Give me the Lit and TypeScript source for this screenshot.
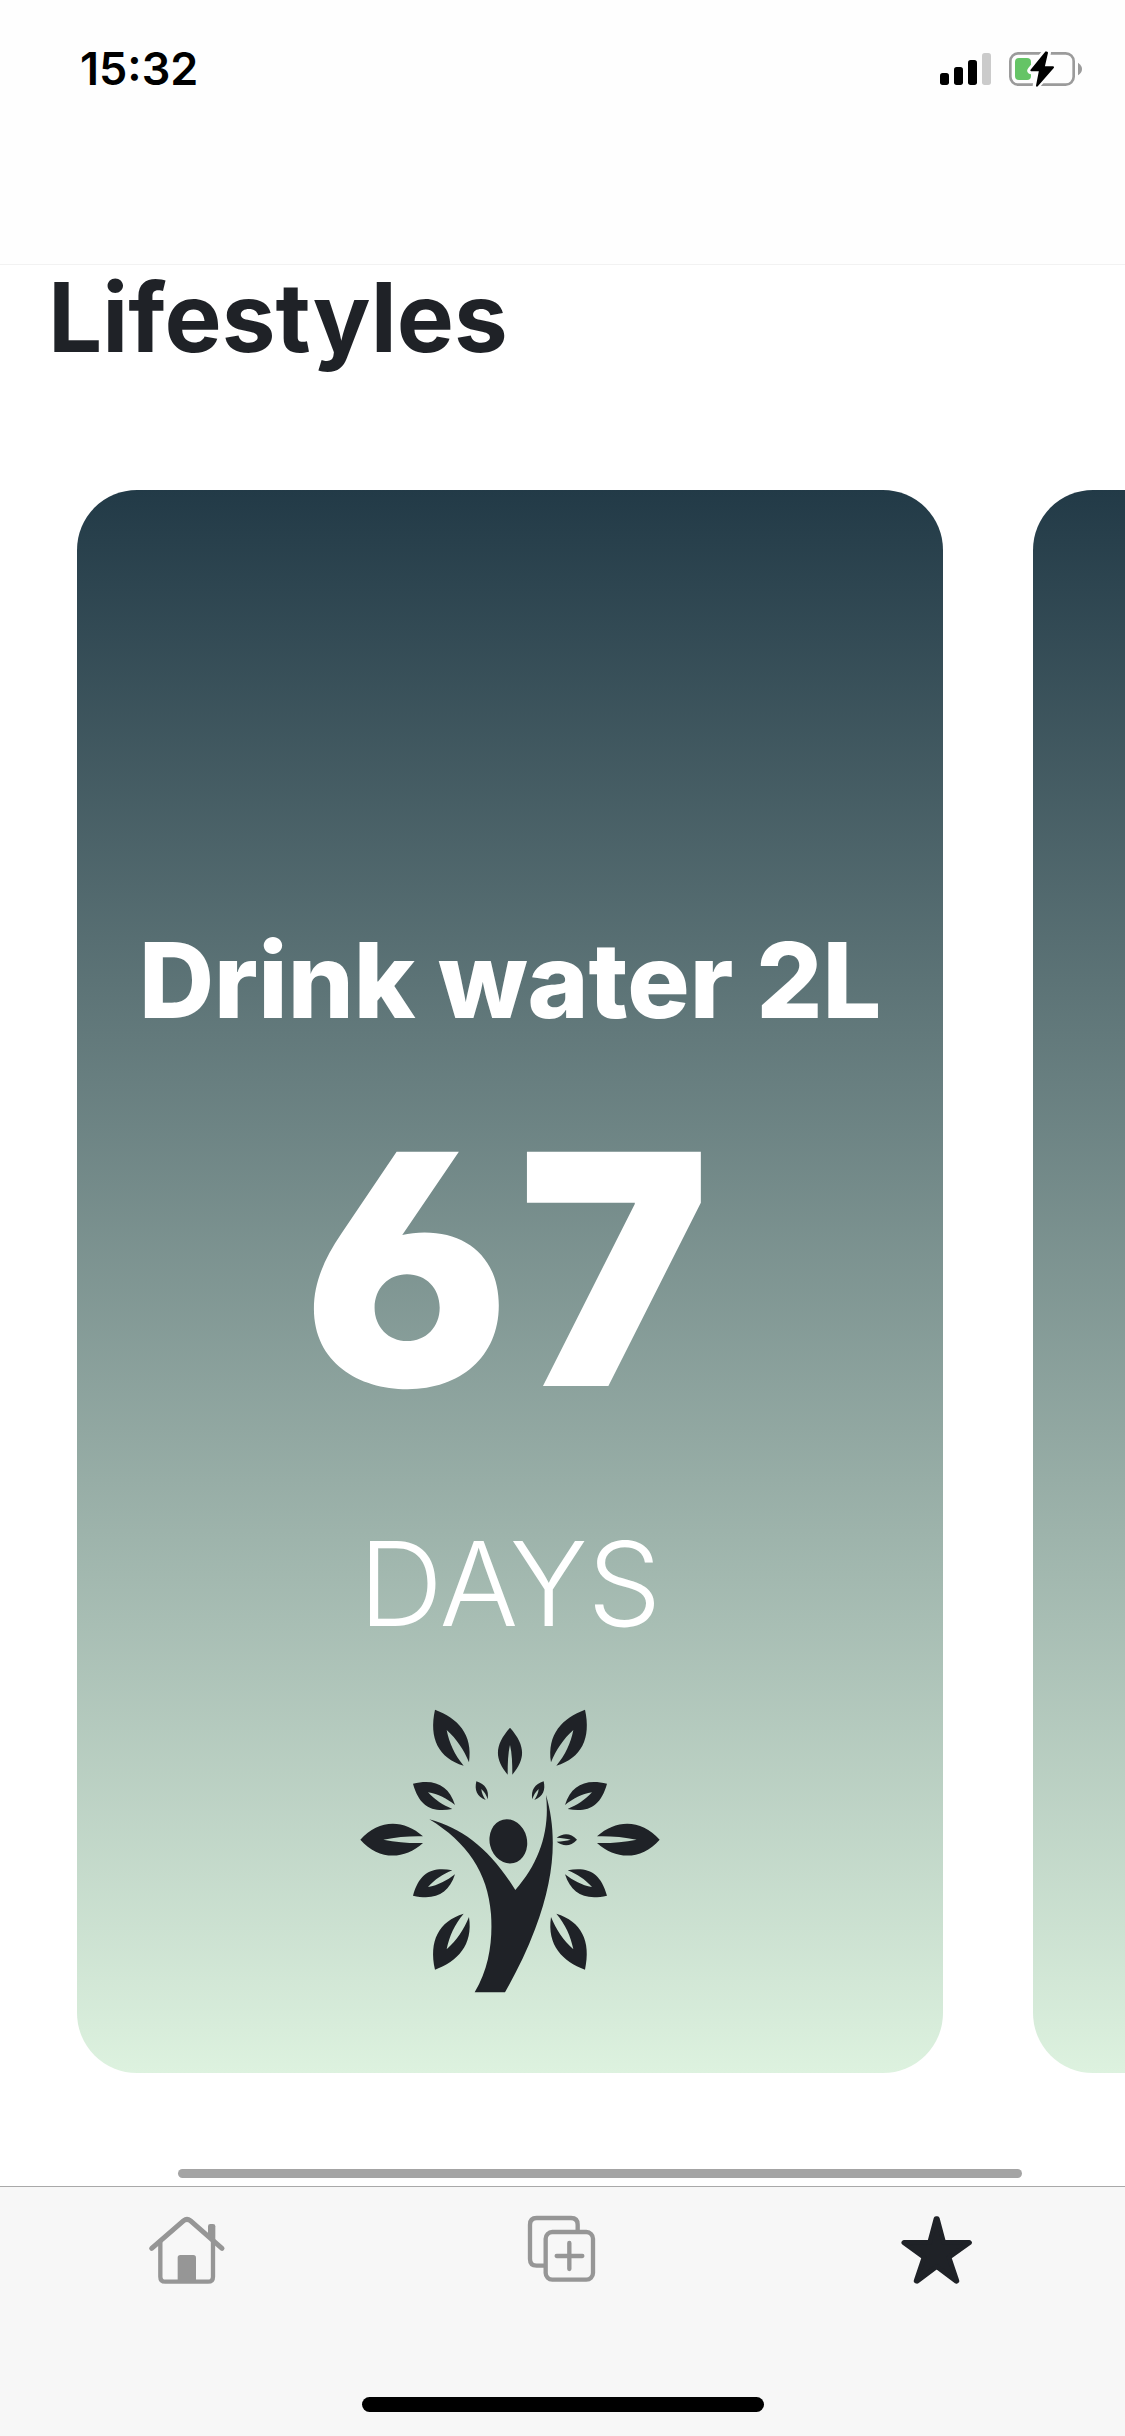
import { LitElement, html, css, svg, nothing } from "lit";
import { customElement, property, state } from "lit/decorators.js";

const BIG_LEAF =
  "M285 59C352 84 400 132 387 217C372 180 350 147 320 120C328 160 344 195 371 227C296 204 266 145 285 59Z";
const MID_LEAF =
  "M219 281C285 266 326 286 345 345C320 326 295 312 264 307C285 330 308 345 337 357C276 368 238 350 219 281Z";
const SIDE_LEAF =
  "M61 449C115 388 190 386 249 439C210 438 170 441 130 449C170 457 210 460 249 459C190 512 115 510 61 449Z";
const SMALL_LEAF =
  "M409 274C436 283 448 300 443 328C439 315 433 305 424 297C425 310 430 320 437 330C410 320 403 300 409 274Z";

@customElement("status-bar")
class StatusBar extends LitElement {
  static styles = css`
    :host {
      display: flex;
      justify-content: space-between;
      align-items: flex-start;
      padding-left: 80px;
      color: #000;
    }
    .time {
      font: 600 45px/78px Inter, "Liberation Sans", sans-serif;
    }
    .icons {
      display: block;
      width: 225px;
      height: 80px;
    }
  `;

  render() {
    return html`
      <time class="time">15:32</time>
      <svg class="icons" viewBox="0 0 675 240" aria-hidden="true">
        <rect x="120" y="129" width="27" height="36" rx="8" />
        <rect x="162" y="111" width="27" height="54" rx="8" />
        <rect x="204" y="90" width="27" height="75" rx="8" />
        <rect x="246" y="69" width="27" height="96" rx="8" fill="#cbcbcb" />
        <rect x="331" y="70" width="190" height="94" rx="24" fill="none" stroke="#9b9b9b" stroke-width="8" />
        <path d="M534 98Q546 106 546 117Q546 129 534 136Z" fill="#9b9b9b" />
        <rect x="345" y="84" width="48" height="66" rx="12" fill="#65c466" />
        <path
          d="M438 66L393 122H418L409 167L458 111H432L442 67Z"
          fill="#000"
          stroke="#fefefe"
          stroke-width="22"
          stroke-linejoin="round"
        />
        <path
          d="M438 67L394 121H420L411 167L459 112H431L441 68Z"
          fill="#000"
          stroke="#000"
          stroke-width="6"
          stroke-linejoin="round"
        />
      </svg>
    `;
  }
}

@customElement("habit-card")
class HabitCard extends LitElement {
  @property() name = "";
  @property({ type: Number }) days = 0;

  static styles = css`
    :host {
      box-sizing: border-box;
      display: flex;
      flex-direction: column;
      align-items: center;
      padding: 428px 20px 63px;
      border-radius: 60px;
      background: linear-gradient(#223a47, #ddf2df);
      color: #fff;
      font-family: Inter, "Open Sans", sans-serif;
      text-align: center;
      white-space: nowrap;
    }
    .name {
      margin: 0;
      font-size: 104px;
      font-weight: 800;
      line-height: 124px;
    }
    .count {
      margin: 32px 0 0;
      font-size: 322px;
      font-weight: 900;
      line-height: 390px;
      font-variant-numeric: tabular-nums;
      font-feature-settings: "cv03", "ss01";
    }
    .unit {
      margin: 49px 0 0;
      font-size: 117px;
      font-weight: 300;
      line-height: 142px;
    }
    .emblem {
      display: block;
      width: 340px;
      height: 320px;
      margin-top: 35px;
      fill: #1f2227;
    }
  `;

  render() {
    if (!this.name) return nothing;
    const leaves = svg`<path d=${BIG_LEAF} /><path d=${MID_LEAF} />`;
    const upper = svg`<path d=${SIDE_LEAF} /><path d=${SMALL_LEAF} />`;
    return html`
      <h2 class="name">${this.name}</h2>
      <p class="count">${this.days}</p>
      <p class="unit">DAYS</p>
      <svg class="emblem" viewBox="0 0 1020 960" aria-hidden="true">
        <g>${leaves}${upper}</g>
        <g transform="translate(1020 0) scale(-1 1)">${leaves}${upper}</g>
        <g transform="translate(0 898) scale(1 -1)">${leaves}</g>
        <g transform="translate(1020 898) scale(-1 -1)">${leaves}</g>
        <path
          d="M510 113C556 165 558 206 517 254C517 220 516 190 510 165C504 190 503 220 503 254C462 206 464 165 510 113Z"
        />
        <path
          d="M711 449C692 428 670 428 650 443C665 444 680 446 692 449C680 452 665 454 650 455C670 470 692 470 711 449Z"
        />
        <ellipse cx="505" cy="454" rx="56" ry="67" transform="rotate(-14 505 454)" />
        <path
          d="M268 388C370 416 450 478 526 600C600 516 630 420 618 315C652 430 645 560 585 718C560 785 530 845 495 907H404C450 830 458 745 453 672C444 548 380 456 268 388Z"
        />
      </svg>
    `;
  }
}

@customElement("tab-bar")
class TabBar extends LitElement {
  @state() private active = 2;

  static styles = css`
    :host {
      display: block;
      border-top: 1px solid #a9a9a9;
      background: #f7f7f7;
    }
    .tabs {
      display: grid;
      grid-template-columns: repeat(3, 1fr);
    }
    .tab {
      display: flex;
      justify-content: center;
      padding: 13px 0 0;
      border: 0;
      background: none;
      color: #969696;
      cursor: pointer;
    }
    .tab.active {
      color: #1f2227;
    }
    .icon {
      display: block;
      width: 120px;
      height: 100px;
    }
    .home {
      width: 402px;
      height: 15px;
      margin: 97px auto 24px;
      border-radius: 8px;
      background: #000;
    }
  `;

  private tabs = [
    {
      label: "Home",
      icon: html`<svg class="icon" viewBox="-7 0 360 300" fill="none" stroke="currentColor" stroke-width="13" aria-hidden="true">
        <path d="M64 145L160 62Q170 54 180 62L275 145" stroke-width="15" stroke-linecap="round" stroke-linejoin="round" />
        <path d="M90 122V230Q90 245 105 245H233Q248 245 248 230V122" />
        <path d="M233 108V79Q233 72 240 72H248Q255 72 255 79V126Z" fill="currentColor" stroke="none" />
        <path d="M142 245V173Q142 165 150 165H189Q197 165 197 173V245Z" fill="currentColor" stroke="none" />
      </svg>`,
    },
    {
      label: "Add",
      icon: html`<svg class="icon" viewBox="-21 0 360 300" fill="none" stroke="currentColor" stroke-width="13" aria-hidden="true">
        <path d="M107 197H80Q60 197 60 177V74Q60 54 80 54H183Q203 54 203 74V96" />
        <rect x="107" y="96" width="142" height="143" rx="20" />
        <path d="M178 129V207M140 168H217" stroke-width="13" stroke-linecap="round" />
      </svg>`,
    },
    {
      label: "Favourites",
      icon: html`<svg class="icon" viewBox="-6 0 360 300" fill="currentColor" stroke="currentColor" stroke-width="14" stroke-linejoin="round" aria-hidden="true">
        <path d="M168 56H172L191 127H268L269 128L207 172L231 243L229 244L170 200L111 244L108 243L132 172L71 128L72 127H149Z" />
      </svg>`,
    },
  ];

  render() {
    return html`
      <nav class="tabs">
        ${this.tabs.map(
          (tab, i) => html`<button
            class="tab ${i === this.active ? "active" : ""}"
            aria-label=${tab.label}
            @click=${() => (this.active = i)}
          >
            ${tab.icon}
          </button>`
        )}
      </nav>
      <div class="home"></div>
    `;
  }
}

@customElement("app-root")
class AppRoot extends LitElement {
  static styles = css`
    :host {
      display: flex;
      flex-direction: column;
      min-height: 100vh;
      background: #fff;
    }
    .header {
      padding: 30px 0 154px;
      border-bottom: 1px solid #f2f2f2;
      background: #fefefe;
    }
    .content {
      flex: 1;
      display: flex;
      flex-direction: column;
      min-width: 0;
    }
    .title {
      margin: 4px 48px 0;
      color: #1f2227;
      font: 700 96px/96px Inter, "Liberation Sans", sans-serif;
    }
    .cards {
      display: flex;
      gap: 90px;
      margin-top: 125px;
      padding-left: 77px;
      overflow-x: auto;
      scrollbar-width: none;
    }
    .card {
      flex: 0 0 77vw;
    }
    .scroll {
      height: 9px;
      margin: 96px 103px 8px 178px;
      border-radius: 5px;
      background: #a4a4a4;
    }
  `;

  private habits = [
    { name: "Drink water 2L", days: 67 },
    { name: "", days: 0 },
  ];

  render() {
    return html`
      <header class="header"><status-bar></status-bar></header>
      <main class="content">
        <h1 class="title">Lifestyles</h1>
        <section class="cards">
          ${this.habits.map(
            (h) => html`<habit-card class="card" .name=${h.name} .days=${h.days}></habit-card>`
          )}
        </section>
        <div class="scroll"></div>
      </main>
      <tab-bar></tab-bar>
    `;
  }
}
